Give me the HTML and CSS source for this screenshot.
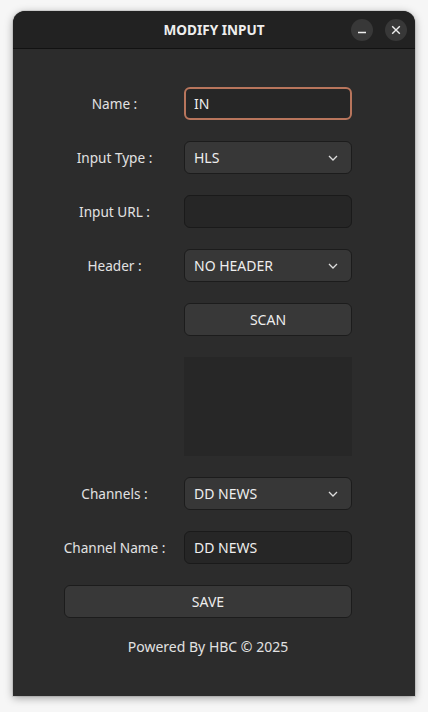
FILE: index.html
```html
<!DOCTYPE html>
<html>
<head>
<meta charset="utf-8">
<link rel="stylesheet" href="styles.css">
</head>
<body>
<div class="window">
  <div class="titlebar">
    <span class="title">MODIFY INPUT</span>
    <div class="controls">
      <span class="ctl"><svg width="10" height="10" viewBox="0 0 10 10"><line x1="1" y1="7.5" x2="9" y2="7.5" stroke="#eee" stroke-width="1.3"/></svg></span>
      <span class="ctl"><svg width="10" height="10" viewBox="0 0 10 10"><path d="M1.2 1.2 L8.8 8.8 M8.8 1.2 L1.2 8.8" stroke="#eee" stroke-width="1.4"/></svg></span>
    </div>
  </div>
  <div class="content">
    <div class="form">
      <label class="lbl">Name :</label>
      <div class="entry focus">IN</div>

      <label class="lbl">Input Type :</label>
      <div class="combo"><span>HLS</span><svg class="chev" width="10" height="6" viewBox="0 0 10 6"><path d="M1 1 L5 5 L9 1" fill="none" stroke="#ddd" stroke-width="1.3"/></svg></div>

      <label class="lbl">Input URL :</label>
      <div class="entry"></div>

      <label class="lbl">Header :</label>
      <div class="combo"><span>NO HEADER</span><svg class="chev" width="10" height="6" viewBox="0 0 10 6"><path d="M1 1 L5 5 L9 1" fill="none" stroke="#ddd" stroke-width="1.3"/></svg></div>

      <span></span>
      <div class="btn">SCAN</div>

      <span></span>
      <div class="textarea"></div>

      <label class="lbl">Channels :</label>
      <div class="combo"><span>DD NEWS</span><svg class="chev" width="10" height="6" viewBox="0 0 10 6"><path d="M1 1 L5 5 L9 1" fill="none" stroke="#ddd" stroke-width="1.3"/></svg></div>

      <label class="lbl">Channel Name :</label>
      <div class="entry">DD NEWS</div>

      <div class="btn wide">SAVE</div>
    </div>
    <div class="footer">Powered By HBC © 2025</div>
  </div>
</div>
</body>
</html>
```
FILE: styles.css
```css
html, body {
  margin: 0;
  padding: 0;
}
body {
  background: #f6f6f6;
  font-family: "Noto Sans", "DejaVu Sans", sans-serif;
  font-size: 14px;
  color: #e8e8e8;
  height: 712px;
  overflow: hidden;
}
.window {
  margin: 11px 0 0 13px;
  width: 402px;
  height: 685px;
  background: #2c2c2c;
  border-radius: 12px 12px 0 0;
  box-shadow: 0 2px 8px rgba(0,0,0,0.35), 0 0 0 1px rgba(0,0,0,0.08);
  overflow: hidden;
}
.titlebar {
  height: 37px;
  background: #222222;
  border-bottom: 1px solid #121212;
  display: flex;
  align-items: center;
  justify-content: center;
  position: relative;
}
.title {
  font-weight: 700;
  font-size: 13.6px;
  color: #eeeeee;
}
.controls {
  position: absolute;
  right: 8px;
  top: 8px;
  display: flex;
  gap: 12px;
}
.ctl {
  width: 22px;
  height: 22px;
  border-radius: 50%;
  background: #383838;
  display: flex;
  align-items: center;
  justify-content: center;
}
.content {
  padding: 38px 63px 0 51px;
}
.form {
  display: grid;
  grid-template-columns: 101px 168px;
  column-gap: 19px;
  row-gap: 21px;
  grid-auto-rows: auto;
}
.lbl {
  display: flex;
  align-items: center;
  justify-content: center;
  white-space: nowrap;
  color: #e2e2e2;
  font-size: 13.6px;
}
.entry {
  box-sizing: border-box;
  height: 33px;
  background: #262626;
  border: 1px solid #1a1a1a;
  border-radius: 6px;
  padding: 0 9px;
  display: flex;
  align-items: center;
  color: #eeeeee;
}
.entry.focus {
  border: 2px solid #b8755c;
  padding: 0 8px;
}
.combo {
  box-sizing: border-box;
  height: 33px;
  background: #373737;
  border: 1px solid #1c1c1c;
  border-radius: 6px;
  padding: 0 13px 0 9px;
  display: flex;
  align-items: center;
  justify-content: space-between;
  color: #eeeeee;
}
.btn {
  box-sizing: border-box;
  height: 33px;
  background: #383838;
  border: 1px solid #1c1c1c;
  border-radius: 6px;
  display: flex;
  align-items: center;
  justify-content: center;
  color: #eeeeee;
}
.btn.wide {
  grid-column: 1 / 3;
}
.textarea {
  height: 99px;
  background: #272727;
}
.footer {
  text-align: center;
  margin-top: 19px;
  width: 288px;
  color: #e2e2e2;
}
```
